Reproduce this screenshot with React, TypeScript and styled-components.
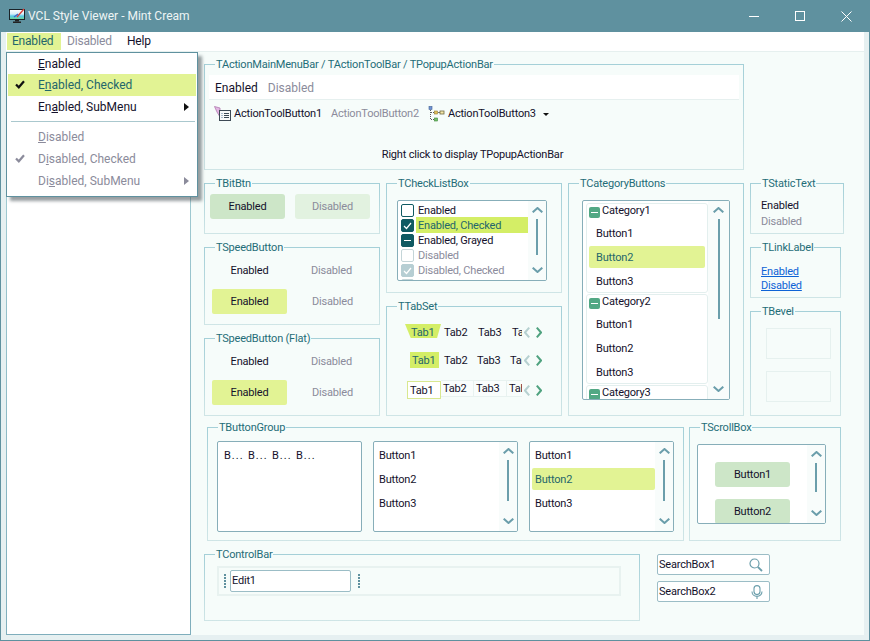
import React from 'react';
import styled, { createGlobalStyle } from 'styled-components';

const GlobalStyle = createGlobalStyle`
	html, body {
		margin: 0;
		padding: 0;
		overflow: hidden;
	}
	* {
		box-sizing: border-box;
	}
`;

const TEXT = '#14112b';
const MUTED = '#8b8b9b';
const TEAL = '#5f919f';
const HOT = '#e2f394';
const LIME = '#d4ee66';
const CLIENT = '#f6fcfa';

const Window = styled.div`
	width: 870px;
	height: 641px;
	display: flex;
	flex-direction: column;
	border: 1px solid ${TEAL};
	border-top: none;
	background: #e6f0f1;
	font-family: Roboto, 'Noto Sans', sans-serif;
	font-size: 11px;
	letter-spacing: -0.2px;
	color: ${TEXT};
	line-height: 14px;
`;

const TitleBar = styled.div`
	height: 32px;
	flex: none;
	display: flex;
	align-items: center;
	padding-left: 8px;
	background: ${TEAL};
	color: #eef5f5;
	font-size: 12px;
	letter-spacing: 0;
`;

const TitleText = styled.span`
	margin-left: 2px;
`;

const Controls = styled.div`
	margin-left: auto;
	display: flex;
`;

const ControlButton = styled.div`
	width: 46px;
	height: 32px;
	display: flex;
	align-items: center;
	justify-content: center;
`;

const Frame = styled.div`
	flex: 1;
	min-height: 0;
	margin: 0 5px 5px 5px;
	display: flex;
	flex-direction: column;
	position: relative;
`;

const MenuBar = styled.div`
	height: 20px;
	flex: none;
	display: flex;
	padding: 1px 0 1px 1px;
	background: #fff;
	border-bottom: 1px solid #e6f0ef;
	font-size: 12px;
`;

const MenuItem = styled.div<{ $state?: 'hot' | 'off'; $w: number }>`
	width: ${(p) => p.$w}px;
	padding-left: ${(p) => (p.$state === 'hot' ? 5 : 6)}px;
	line-height: 17px;
	background: ${(p) => (p.$state === 'hot' ? HOT : 'transparent')};
	color: ${(p) => (p.$state === 'hot' ? '#24666b' : p.$state === 'off' ? MUTED : TEXT)};
`;

const Popup = styled.div`
	position: absolute;
	top: 20px;
	left: 0;
	z-index: 10;
	width: 192px;
	height: 145px;
	padding: 0 1px;
	background: #fff;
	border: 1px solid ${TEAL};
	box-shadow: 4px 4px 3px rgba(70, 80, 85, 0.55);
	font-size: 12px;
	letter-spacing: 0;
`;

const PopupItem = styled.div<{ $hot?: boolean; $off?: boolean; $h?: number }>`
	height: ${(p) => p.$h ?? 22}px;
	display: flex;
	align-items: center;
	padding-left: 30px;
	position: relative;
	background: ${(p) => (p.$hot ? HOT : 'transparent')};
	color: ${(p) => (p.$hot ? '#24666b' : p.$off ? MUTED : TEXT)};
`;

const PopupCheck = styled.svg`
	position: absolute;
	left: 7px;
	top: 6px;
`;

const SubArrow = styled.span<{ $off?: boolean }>`
	position: absolute;
	right: 7px;
	top: 7px;
	border-left: 5px solid ${(p) => (p.$off ? MUTED : '#111')};
	border-top: 4px solid transparent;
	border-bottom: 4px solid transparent;
`;

const PopupLine = styled.div`
	height: 1px;
	margin: 3px 1px 4px 3px;
	background: #aac8ce;
`;

const Client = styled.div`
	flex: 1;
	min-height: 0;
	display: flex;
	background: ${CLIENT};
`;

const SidePanel = styled.div`
	width: 185px;
	flex: none;
	background: #fff;
	border: 1px solid;
	border-top: none;
	border-image: linear-gradient(#a9d2d8, #7faebc) 1;
`;

const Content = styled.div`
	flex: 1;
	padding: 12px 0 0 13px;
	display: flex;
	flex-direction: column;
	gap: 13px;
`;

const Row = styled.div<{ $gap: number; $indent?: number; $pull?: number }>`
	display: flex;
	gap: ${(p) => p.$gap}px;
	margin-left: ${(p) => p.$indent ?? 0}px;
	margin-top: ${(p) => p.$pull ?? 0}px;
`;

const Column = styled.div`
	display: flex;
	flex-direction: column;
	gap: 13px;
`;

const GroupBox = styled.div<{ $w: number; $h: number; $pad?: string }>`
	position: relative;
	width: ${(p) => p.$w}px;
	height: ${(p) => p.$h}px;
	padding: ${(p) => p.$pad ?? '0'};
	border: 1px solid;
	border-image: linear-gradient(#a5d0d8, #a5d0d8 4px, #cfe5e6) 1;
`;

const Legend = styled.span`
	position: absolute;
	top: -7px;
	left: 10px;
	padding: 0 1px;
	background: ${CLIENT};
	color: #1f6d78;
	white-space: nowrap;
`;

type GroupProps = {
	title: string;
	w: number;
	h: number;
	pad?: string;
	children?: React.ReactNode;
};

function Group({ title, w, h, pad, children }: GroupProps) {
	return (
		<GroupBox $w={w} $h={h} $pad={pad}>
			<Legend>{title}</Legend>
			{children}
		</GroupBox>
	);
}

const ActionMenu = styled.div`
	height: 25px;
	display: flex;
	gap: 10px;
	align-items: center;
	padding: 1px 0 0 6px;
	background: #fff;
	border-bottom: 1px solid #e6f0ef;
	font-size: 12px;
	letter-spacing: 0;
`;

const ActionToolBar = styled.div`
	display: flex;
	align-items: center;
	height: 28px;
	padding-left: 5px;
`;

const ToolIcon = styled.svg<{ $gap?: number }>`
	flex: none;
	margin-left: ${(p) => p.$gap ?? 0}px;
`;

const ToolLabel = styled.span<{ $off?: boolean; $gap?: number }>`
	margin-left: ${(p) => p.$gap ?? 3}px;
	color: ${(p) => (p.$off ? MUTED : TEXT)};
`;

const DropArrow = styled.span`
	margin-left: 7px;
	border-top: 3px solid #111;
	border-left: 3px solid transparent;
	border-right: 3px solid transparent;
`;

const Hint = styled.div`
	margin-top: 20px;
	text-align: center;
	padding-right: 3px;
`;

const Off = styled.span`
	color: ${MUTED};
`;

const ButtonRow = styled.div<{ $gap: number }>`
	display: flex;
	gap: ${(p) => p.$gap}px;
`;

const BitBtn = styled.div<{ $off?: boolean }>`
	width: 75px;
	height: 25px;
	flex: none;
	display: flex;
	align-items: center;
	justify-content: center;
	padding-top: 1px;
	border-radius: 3px;
	background: ${(p) => (p.$off ? '#e2f2e0' : '#cde6c8')};
	color: ${(p) => (p.$off ? MUTED : TEXT)};
`;

const SpeedBtn = styled.div<{ $hot?: boolean; $off?: boolean }>`
	width: 75px;
	height: 25px;
	display: flex;
	align-items: center;
	justify-content: center;
	padding-top: 1px;
	border-radius: 2px;
	background: ${(p) => (p.$hot ? HOT : 'transparent')};
	color: ${(p) => (p.$off ? MUTED : TEXT)};
`;

const SpeedStack = styled.div`
	display: flex;
	flex-direction: column;
	gap: 6px;
`;

const ListBox = styled.div<{ $w: number; $h: number }>`
	width: ${(p) => p.$w}px;
	height: ${(p) => p.$h}px;
	display: flex;
	flex: none;
	overflow: hidden;
	background: #fff;
	border: 1px solid #87aeb9;
	border-radius: 2px;
`;

const ListBody = styled.div<{ $pad?: string }>`
	flex: 1;
	min-width: 0;
	overflow: hidden;
	padding: ${(p) => p.$pad ?? '0'};
`;

const CheckRow = styled.div<{ $hot?: boolean; $off?: boolean }>`
	height: 15px;
	display: flex;
	align-items: center;
	padding-left: 3px;
	color: ${(p) => (p.$off ? MUTED : p.$hot ? '#24666b' : TEXT)};
`;

const CheckLabel = styled.span<{ $hot?: boolean }>`
	flex: 1;
	height: 15px;
	line-height: 15px;
	margin-left: 2px;
	padding-left: 2px;
	background: ${(p) => (p.$hot ? LIME : 'transparent')};
	box-shadow: ${(p) => (p.$hot ? `0 -1px 0 ${LIME}` : 'none')};
`;

type CheckKind = 'empty' | 'checked' | 'grayed';

const CheckBox = styled.span<{ $kind: CheckKind; $off?: boolean }>`
	width: 13px;
	height: 13px;
	flex: none;
	display: flex;
	align-items: center;
	justify-content: center;
	border-radius: 2px;
	border: 1px solid ${(p) => (p.$off ? '#c4d5d8' : '#0f5a62')};
	background: ${(p) =>
		p.$kind === 'empty' ? '#fff' : p.$off ? '#b6ced3' : '#0f5a62'};
	${(p) => (p.$off && p.$kind !== 'empty' ? 'border-color: #b6ced3;' : '')}
`;

const ScrollTrack = styled.div<{ $w?: number }>`
	width: ${(p) => p.$w ?? 18}px;
	flex: none;
	display: flex;
	flex-direction: column;
	align-items: center;
	padding: 6px 0 7px;
	background: #f8fcfb;
`;

const ScrollThumb = styled.div<{ $h: number }>`
	width: 2px;
	height: ${(p) => p.$h}px;
	margin: 6px 0 auto;
	background: #6b9eab;
`;

function Chevron({ dir }: { dir: 'up' | 'down' }) {
	return (
		<svg width="11" height="6" viewBox="0 0 11 6" style={{ flex: 'none' }}>
			<polyline
				points={dir === 'up' ? '0.7,5.3 5.5,1 10.3,5.3' : '0.7,0.7 5.5,5 10.3,0.7'}
				fill="none"
				stroke="#6b9eab"
				strokeWidth="2"
			/>
		</svg>
	);
}

function ScrollBar({ thumb, w }: { thumb: number; w?: number }) {
	return (
		<ScrollTrack $w={w}>
			<Chevron dir="up" />
			<ScrollThumb $h={thumb} />
			<Chevron dir="down" />
		</ScrollTrack>
	);
}

type TabKind = 'trap' | 'bar' | 'box';

const TabStack = styled.div`
	display: flex;
	flex-direction: column;
	gap: 8px;
`;

const TabRow = styled.div<{ $drop?: boolean }>`
	height: 20px;
	display: flex;
	align-items: center;
	margin-top: ${(p) => (p.$drop ? 2 : 0)}px;
`;

const TabStrip = styled.div<{ $kind: TabKind }>`
	width: 117px;
	height: 100%;
	flex: none;
	display: flex;
	align-items: center;
	overflow: hidden;
	padding-left: ${(p) => (p.$kind === 'bar' ? 5 : p.$kind === 'box' ? 2 : 0)}px;
`;

const Tab = styled.div<{ $kind: TabKind }>`
	flex: none;
	width: ${(p) => (p.$kind === 'trap' ? 34 : 33)}px;
	padding-left: ${(p) => (p.$kind === 'trap' ? 3 : p.$kind === 'bar' ? 5 : 2)}px;
	padding-top: ${(p) => (p.$kind === 'box' ? 0 : 1)}px;
	${(p) =>
		p.$kind === 'box'
			? 'height: 17px; margin-top: -3px; border: 1px solid #e8f2f0; border-left: none; line-height: 15px; background: #f9fdfc;'
			: ''}
`;

const TrapTab = styled.div`
	flex: none;
	width: 36px;
	height: 14px;
	margin-top: -2px;
	padding-left: 6px;
	line-height: 18px;
	background: ${LIME};
	color: #24666b;
	clip-path: polygon(0 0, 100% 0, 89% 100%, 16% 100%);
`;

const BarTab = styled.div`
	flex: none;
	width: 29px;
	height: 16px;
	padding-left: 2px;
	line-height: 17px;
	background: ${LIME};
	color: #24666b;
`;

const BoxTab = styled.div`
	flex: none;
	width: 34px;
	height: 18px;
	padding-left: 2px;
	line-height: 17px;
	background: #fff;
	border: 1px solid #d8e890;
`;

const TabArrows = styled.div`
	display: flex;
	gap: 6px;
	margin-left: 2px;
`;

function TabChevrons() {
	return (
		<TabArrows>
			<svg width="6" height="11" viewBox="0 0 6 11">
				<polyline points="5.2,0.7 1,5.5 5.2,10.3" fill="none" stroke="#b6d0d0" strokeWidth="2" />
			</svg>
			<svg width="6" height="11" viewBox="0 0 6 11">
				<polyline points="0.8,0.7 5,5.5 0.8,10.3" fill="none" stroke="#4fa27f" strokeWidth="2" />
			</svg>
		</TabArrows>
	);
}

const CategoryCard = styled.div`
	height: 90px;
	margin-bottom: 1px;
	padding: 0 2px;
	overflow: hidden;
	background: #fff;
	border: 1px solid #e3efee;
	border-radius: 3px;
`;

const CategoryHead = styled.div`
	height: 14px;
	margin-bottom: 4px;
	display: flex;
	align-items: center;
	gap: 2px;
	line-height: 16px;
`;

const MinusBox = styled.span`
	width: 11px;
	height: 11px;
	margin-top: 2px;
	display: flex;
	align-items: center;
	justify-content: center;
	background: #52a884;
	border-radius: 2px;
	&::after {
		content: '';
		width: 7px;
		height: 1px;
		background: #fff;
	}
`;

const ListButton = styled.div<{ $hot?: boolean; $gap?: number; $pad?: number }>`
	height: 22px;
	margin-bottom: ${(p) => p.$gap ?? 2}px;
	display: flex;
	align-items: center;
	padding-left: ${(p) => p.$pad ?? 7}px;
	padding-top: 1px;
	border-radius: 2px;
	background: ${(p) => (p.$hot ? HOT : 'transparent')};
	color: ${(p) => (p.$hot ? '#24666b' : TEXT)};
`;

const StaticLine = styled.div`
	height: 16px;
	line-height: 16px;
`;

const LinkLine = styled.a`
	display: block;
	height: 14px;
	line-height: 14px;
	color: #0e63d6;
	text-decoration: underline;
`;

const BevelStack = styled.div`
	display: flex;
	flex-direction: column;
	gap: 12px;
`;

const Bevel = styled.div`
	width: 65px;
	height: 31px;
	border: 1px solid #e6f1ef;
`;

const TinyButtons = styled.div`
	display: flex;
	padding: 7px 0 0 6px;
`;

const TinyButton = styled.span`
	width: 24px;
	letter-spacing: 1px;
`;

const ControlBand = styled.div`
	width: 404px;
	height: 30px;
	display: flex;
	align-items: center;
	padding-left: 5px;
	border: 2px solid #e8f2f0;
`;

const Grip = styled.span`
	width: 2px;
	height: 14px;
	flex: none;
	background: repeating-linear-gradient(${TEAL} 0 2px, transparent 2px 3px);
`;

const EditBox = styled.div`
	width: 121px;
	height: 22px;
	margin: 0 7px 0 4px;
	padding-left: 1px;
	line-height: 20px;
	background: #fff;
	border: 1px solid #9bbdc6;
	border-radius: 2px;
`;

const SearchStack = styled.div`
	display: flex;
	flex-direction: column;
	gap: 6px;
`;

const SearchBox = styled.div`
	width: 113px;
	height: 21px;
	display: flex;
	align-items: center;
	justify-content: space-between;
	padding: 0 6px 0 1px;
	background: #fff;
	border: 1px solid #9bbdc6;
	border-radius: 2px;
`;

const ScrollItems = styled.div`
	flex: 1;
	display: flex;
	flex-direction: column;
	gap: 12px;
	padding: 17px 0 0 17px;
	overflow: hidden;
`;

function AppIcon() {
	return (
		<svg width="17" height="16" viewBox="0 0 17 16">
			<defs>
				<linearGradient id="screen" x1="0" y1="0" x2="0" y2="1">
					<stop offset="0" stopColor="#ffffff" />
					<stop offset="0.45" stopColor="#d7eef7" />
					<stop offset="0.65" stopColor="#57c8e8" />
					<stop offset="1" stopColor="#72d38a" />
				</linearGradient>
			</defs>
			<rect x="0.5" y="1.5" width="15" height="10" fill="url(#screen)" stroke="#1b2328" />
			<path d="M8 9 L15 1" stroke="#d8403a" strokeWidth="1.4" />
			<path d="M5 9 L9 6" stroke="#3a62c8" strokeWidth="1.2" />
			<rect x="6" y="12" width="4" height="1.5" fill="#222" />
			<rect x="4" y="13.5" width="8" height="1.5" fill="#222" />
		</svg>
	);
}

function DocIcon() {
	return (
		<ToolIcon width="17" height="16" viewBox="0 0 17 16">
			<path d="M0.5 0.5 L6 2 L6 11 L3 6 Z" fill="#e2b6e2" stroke="#b07ab0" strokeWidth="0.8" />
			<rect x="5.5" y="4.5" width="11" height="10" fill="#fafafa" stroke="#3e4a55" />
			<path d="M10 7.5h5M10 9.5h5M10 11.5h5" stroke="#3e4a55" />
			<path d="M7.5 7.5h1M7.5 9.5h1M7.5 11.5h1" stroke="#5b7fa0" />
		</ToolIcon>
	);
}

function TreeIcon() {
	return (
		<ToolIcon $gap={9} width="17" height="16" viewBox="0 0 17 16">
			<rect x="1" y="0.5" width="3" height="3" fill="#6f93d8" stroke="#40608f" strokeWidth="0.6" />
			<path d="M2.5 4v10M3 6.5h4M3 13.5h4" stroke="#5a5a5a" strokeDasharray="1 1" />
			<rect x="6.5" y="5" width="3" height="3" fill="#e3c15a" stroke="#8f7a30" strokeWidth="0.6" />
			<rect x="6.5" y="12" width="3" height="3" fill="#73c26c" stroke="#3f8438" strokeWidth="0.6" />
			<path d="M10 6.5h2" stroke="#777" />
			<rect x="12" y="5" width="4" height="3" fill="#f4e6a8" stroke="#6f6a40" strokeWidth="0.8" />
		</ToolIcon>
	);
}

function Check({ color = '#111' }: { color?: string }) {
	return (
		<PopupCheck width="10" height="9" viewBox="0 0 10 9">
			<path d="M1 4.5 L3.8 7.3 L9 1.2" fill="none" stroke={color} strokeWidth="2.2" />
		</PopupCheck>
	);
}

function BoxMark({ kind }: { kind: CheckKind }) {
	if (kind === 'checked') {
		return (
			<svg width="9" height="8" viewBox="0 0 9 8">
				<path d="M1 4 L3.5 6.5 L8 1" fill="none" stroke="#fff" strokeWidth="1.2" />
			</svg>
		);
	}
	if (kind === 'grayed') {
		return (
			<svg width="7" height="3" viewBox="0 0 7 3">
				<rect y="1" width="7" height="1" fill="#fff" />
			</svg>
		);
	}
	return null;
}

const checkRows: { label: string; kind: CheckKind; off?: boolean; hot?: boolean }[] = [
	{ label: 'Enabled', kind: 'empty' },
	{ label: 'Enabled, Checked', kind: 'checked', hot: true },
	{ label: 'Enabled, Grayed', kind: 'grayed' },
	{ label: 'Disabled', kind: 'empty', off: true },
	{ label: 'Disabled, Checked', kind: 'checked', off: true },
	{ label: '', kind: 'empty', off: true },
];

const tabLabels = ['Tab2', 'Tab3', 'Tab4'];

function Category({ name, hot }: { name: string; hot?: boolean }) {
	return (
		<CategoryCard>
			<CategoryHead>
				<MinusBox />
				<span>{name}</span>
			</CategoryHead>
			<ListButton>Button1</ListButton>
			<ListButton $hot={hot}>Button2</ListButton>
			<ListButton>Button3</ListButton>
		</CategoryCard>
	);
}

function SpeedGroup({ title }: { title: string }) {
	return (
		<Group title={title} w={176} h={78} pad="10px 0 0 7px">
			<SpeedStack>
				<ButtonRow $gap={7}>
					<SpeedBtn>Enabled</SpeedBtn>
					<SpeedBtn $off>Disabled</SpeedBtn>
				</ButtonRow>
				<ButtonRow $gap={8}>
					<SpeedBtn $hot>Enabled</SpeedBtn>
					<SpeedBtn $off>Disabled</SpeedBtn>
				</ButtonRow>
			</SpeedStack>
		</Group>
	);
}

function App() {
	return (
		<Window>
			<GlobalStyle />
			<TitleBar>
				<AppIcon />
				<TitleText>VCL Style Viewer - Mint Cream</TitleText>
				<Controls>
					<ControlButton>
						<svg width="10" height="10" viewBox="0 0 10 10">
							<path d="M0 5.5h10" stroke="#fff" />
						</svg>
					</ControlButton>
					<ControlButton>
						<svg width="10" height="10" viewBox="0 0 10 10">
							<rect x="0.5" y="0.5" width="9" height="9" fill="none" stroke="#fff" />
						</svg>
					</ControlButton>
					<ControlButton>
						<svg width="11" height="11" viewBox="0 0 11 11">
							<path d="M0.5 0.5 L10.5 10.5 M10.5 0.5 L0.5 10.5" stroke="#fff" />
						</svg>
					</ControlButton>
				</Controls>
			</TitleBar>
			<Frame>
				<MenuBar>
					<MenuItem $state="hot" $w={54}>Enabled</MenuItem>
					<MenuItem $state="off" $w={60}>Disabled</MenuItem>
					<MenuItem $w={50}>Help</MenuItem>
				</MenuBar>
				<Popup>
					<PopupItem $h={21}>
						<span><u>E</u>nabled</span>
					</PopupItem>
					<PopupItem $hot>
						<Check />
						<span>E<u>n</u>abled, Checked</span>
					</PopupItem>
					<PopupItem>
						<span>En<u>a</u>bled, SubMenu</span>
						<SubArrow />
					</PopupItem>
					<PopupLine />
					<PopupItem $off>
						<span><u>D</u>isabled</span>
					</PopupItem>
					<PopupItem $off>
						<Check color={MUTED} />
						<span>D<u>i</u>sabled, Checked</span>
					</PopupItem>
					<PopupItem $off>
						<span>Di<u>s</u>abled, SubMenu</span>
						<SubArrow $off />
					</PopupItem>
				</Popup>
				<Client>
					<SidePanel />
					<Content>
						<Group title="TActionMainMenuBar / TActionToolBar / TPopupActionBar" w={540} h={106} pad="10px 4px 0">
							<ActionMenu>
								<span>Enabled</span>
								<Off>Disabled</Off>
							</ActionMenu>
							<ActionToolBar>
								<DocIcon />
								<ToolLabel>ActionToolButton1</ToolLabel>
								<ToolLabel $off $gap={9}>ActionToolButton2</ToolLabel>
								<TreeIcon />
								<ToolLabel>ActionToolButton3</ToolLabel>
								<DropArrow />
							</ActionToolBar>
							<Hint>Right click to display TPopupActionBar</Hint>
						</Group>
						<Row $gap={6}>
							<Column>
								<Group title="TBitBtn" w={176} h={51} pad="10px 0 0 5px">
									<ButtonRow $gap={10}>
										<BitBtn>Enabled</BitBtn>
										<BitBtn $off>Disabled</BitBtn>
									</ButtonRow>
								</Group>
								<SpeedGroup title="TSpeedButton" />
								<SpeedGroup title="TSpeedButton (Flat)" />
							</Column>
							<Column>
								<Group title="TCheckListBox" w={176} h={110} pad="16px 0 0 10px">
									<ListBox $w={150} $h={81}>
										<ListBody $pad="2px 0 0">
											{checkRows.map((row, i) => (
												<CheckRow key={i} $hot={row.hot} $off={row.off}>
													<CheckBox $kind={row.kind} $off={row.off}>
														<BoxMark kind={row.kind} />
													</CheckBox>
													<CheckLabel $hot={row.hot}>{row.label}</CheckLabel>
												</CheckRow>
											))}
										</ListBody>
										<ScrollBar thumb={36} />
									</ListBox>
								</Group>
								<Group title="TTabSet" w={176} h={110} pad="15px 0 0 18px">
									<TabStack>
										<TabRow>
											<TabStrip $kind="trap">
												<TrapTab>Tab1</TrapTab>
												{tabLabels.map((t) => (
													<Tab key={t} $kind="trap">{t}</Tab>
												))}
											</TabStrip>
											<TabChevrons />
										</TabRow>
										<TabRow>
											<TabStrip $kind="bar">
												<BarTab>Tab1</BarTab>
												{tabLabels.map((t) => (
													<Tab key={t} $kind="bar">{t}</Tab>
												))}
											</TabStrip>
											<TabChevrons />
										</TabRow>
										<TabRow $drop>
											<TabStrip $kind="box">
												<BoxTab>Tab1</BoxTab>
												{tabLabels.map((t) => (
													<Tab key={t} $kind="box">{t}</Tab>
												))}
											</TabStrip>
											<TabChevrons />
										</TabRow>
									</TabStack>
								</Group>
							</Column>
							<Group title="TCategoryButtons" w={176} h={233} pad="16px 0 0 13px">
								<ListBox $w={148} $h={200}>
									<ListBody $pad="2px 0 0 3px">
										<Category name="Category1" hot />
										<Category name="Category2" />
										<Category name="Category3" />
									</ListBody>
									<ScrollBar thumb={100} w={21} />
								</ListBox>
							</Group>
							<Column>
								<Group title="TStaticText" w={94} h={51} pad="14px 0 0 10px">
									<StaticLine>Enabled</StaticLine>
									<StaticLine><Off>Disabled</Off></StaticLine>
								</Group>
								<Group title="TLinkLabel" w={91} h={51} pad="17px 0 0 10px">
									<LinkLine>Enabled</LinkLine>
									<LinkLine>Disabled</LinkLine>
								</Group>
								<Group title="TBevel" w={91} h={105} pad="16px 0 0 15px">
									<BevelStack>
										<Bevel />
										<Bevel />
									</BevelStack>
								</Group>
							</Column>
						</Row>
						<Row $gap={5} $indent={3} $pull={-2}>
							<Group title="TButtonGroup" w={477} h={114} pad="13px 0 0 9px">
								<Row $gap={11}>
									<ListBox $w={145} $h={91}>
										<ListBody>
											<TinyButtons>
												<TinyButton>B...</TinyButton>
												<TinyButton>B...</TinyButton>
												<TinyButton>B...</TinyButton>
												<TinyButton>B...</TinyButton>
											</TinyButtons>
										</ListBody>
									</ListBox>
									<ListBox $w={145} $h={91}>
										<ListBody $pad="2px 2px 0">
											<ListButton $pad={3}>Button1</ListButton>
											<ListButton $pad={3}>Button2</ListButton>
											<ListButton $pad={3}>Button3</ListButton>
										</ListBody>
										<ScrollBar thumb={41} />
									</ListBox>
									<ListBox $w={145} $h={91}>
										<ListBody $pad="2px 0 0 2px">
											<ListButton $pad={3}>Button1</ListButton>
											<ListButton $pad={3} $hot>Button2</ListButton>
											<ListButton $pad={3}>Button3</ListButton>
										</ListBody>
										<ScrollBar thumb={41} />
									</ListBox>
								</Row>
							</Group>
							<Group title="TScrollBox" w={152} h={114} pad="16px 0 0 7px">
								<ListBox $w={129} $h={80}>
									<ScrollItems>
										<BitBtn>Button1</BitBtn>
										<BitBtn>Button2</BitBtn>
									</ScrollItems>
									<ScrollBar thumb={29} />
								</ListBox>
							</Group>
						</Row>
						<Row $gap={17}>
							<Group title="TControlBar" w={436} h={67} pad="11px 0 0 12px">
								<ControlBand>
									<Grip />
									<EditBox>Edit1</EditBox>
									<Grip />
								</ControlBand>
							</Group>
							<SearchStack>
								<SearchBox>
									<span>SearchBox1</span>
									<svg width="14" height="14" viewBox="0 0 14 14">
										<circle cx="5.5" cy="5.5" r="4.5" fill="none" stroke="#6b9eab" strokeWidth="1.2" />
										<path d="M8.8 8.8 L13 13" stroke="#6b9eab" strokeWidth="1.8" />
									</svg>
								</SearchBox>
								<SearchBox>
									<span>SearchBox2</span>
									<svg width="12" height="14" viewBox="0 0 12 14">
										<rect x="3" y="0.6" width="6" height="9" rx="3" fill="none" stroke="#6b9eab" strokeWidth="1.1" />
										<path d="M1 6.5 C1 13 11 13 11 6.5 M6 11 V14" fill="none" stroke="#6b9eab" strokeWidth="1.1" />
									</svg>
								</SearchBox>
							</SearchStack>
						</Row>
					</Content>
				</Client>
			</Frame>
		</Window>
	);
}

export default App;
